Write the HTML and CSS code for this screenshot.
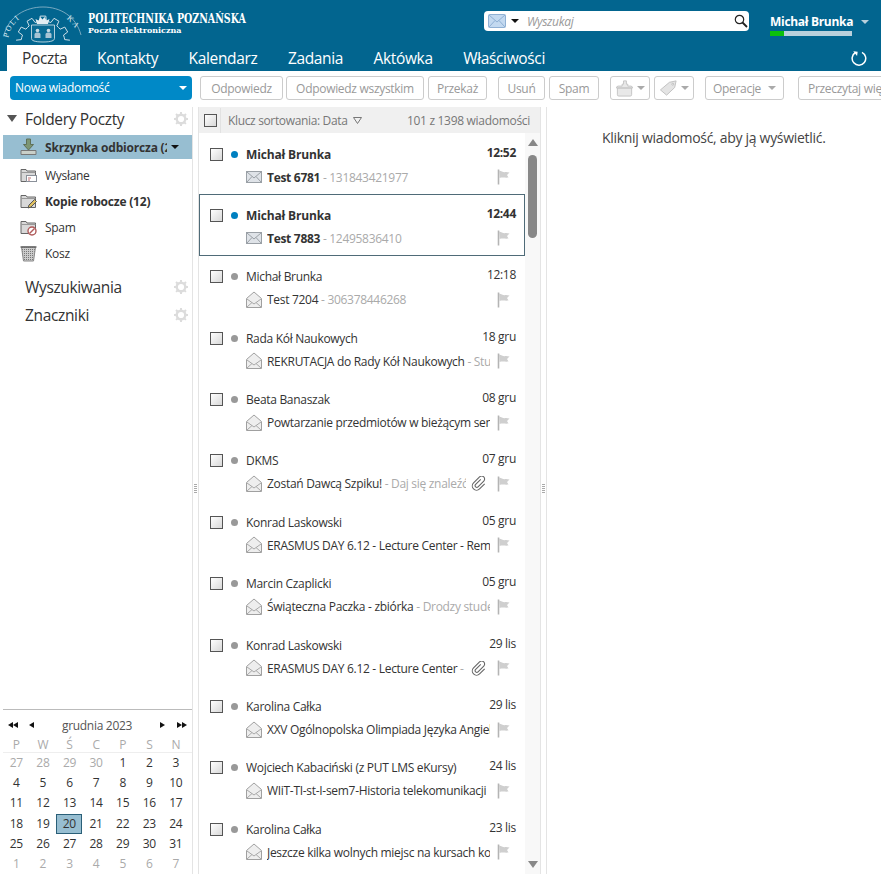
FILE: index.html
```html
<!DOCTYPE html>
<html lang="pl">
<head>
    <meta charset="UTF-8">
    <title>Poczta elektroniczna</title>
    <link rel="stylesheet" href="styles.css">
</head>
<body>
    <svg class="sprites" width="0" height="0">
        <symbol id="i-env" viewBox="0 0 16 16">
            <rect x="0.5" y="2.5" width="15" height="11" fill="#dfe3e8" stroke="#9aa0a6"/>
            <path d="M1 3l7 6 7-6M1 13l5-5.5M15 13l-5-5.5" fill="none" stroke="#9aa0a6"/>
        </symbol>
        <symbol id="i-env-blue" viewBox="0 0 18 14">
            <rect x="0.5" y="0.5" width="17" height="13" rx="1" fill="#c3d9f0" stroke="#8fb0d4"/>
            <path d="M1 1l8 7 8-7M1 13l6-6.500M17 13l-6-6.500" fill="none" stroke="#8fb0d4"/>
        </symbol>
        <symbol id="i-open" viewBox="0 0 16 18">
            <path d="M0.5 7.5L8 1l7.5 6.5v9h-15z" fill="#eeeeee" stroke="#a0a0a0"/>
            <path d="M1 8l7 5 7-5M1 16l5-4.5M15 16l-5-4.5" fill="none" stroke="#a8a8a8"/>
        </symbol>
        <symbol id="i-flag" viewBox="0 0 13 16">
            <path d="M1.5 0.5v15" stroke="#b4b4b4" stroke-width="1.6"/>
            <path d="M2 1.500c3 1 4 2 7 1.500l3.500 .5-2.500 2.500 1.500 2.500c-3 .5-6-.5-9 .5z" fill="#cfcfcf"/>
        </symbol>
        <symbol id="i-gear" viewBox="0 0 14 14">
            <circle cx="7" cy="7" r="4.300" fill="none" stroke="#dcdcdc" stroke-width="2.400"/>
            <path d="M7 0v14M0 7h14M2 2l10 10M12 2L2 12" stroke="#dcdcdc" stroke-width="2" stroke-dasharray="2.200 9.600"/>
        </symbol>
        <symbol id="i-clip" viewBox="0 0 15 15">
            <g transform="rotate(45 7.500 7.500) translate(1.500 0) scale(.85)">
                <path d="M5.500 3.500v8.500a2 2 0 0 0 4 0V2.500a3.500 3.500 0 0 0-7 0v10a5 5 0 0 0 10 0V4" fill="none" stroke="#666" stroke-width="1.300"/>
            </g>
        </symbol>
        <symbol id="i-folder" viewBox="0 0 17 17">
            <path d="M1 2.500h5l1 1.500h8.500v10.500H1z" fill="#d9d9d9" stroke="#666"/>
            <path d="M1 5.500h14.500" stroke="#999"/>
        </symbol>
    </svg>

    <header class="topbar">
        <div class="brand">
            <svg class="logo" width="85" height="38" viewBox="0 0 85 38">
                <defs>
                    <path id="logo-arc" d="M6 36C7 17 24 6 41 6s34 11 36 30"/>
                </defs>
                <path d="M2 30C7 11 24 2 41 2s33 9 38 28" fill="none" stroke="#a9c6d6" stroke-width=".7"/>
                <text class="logo-arc-text"><textPath href="#logo-arc" startOffset="3">POLI</textPath></text>
                <text class="logo-arc-text"><textPath href="#logo-arc" startOffset="76">KA</textPath></text>
                <path d="M14.100 35.200L19.300 34.600A22 22 0 0 1 20.500 30.100L16.300 27L19.200 22.100L23.900 24.200A22 22 0 0 1 27.200 20.900L25.100 16.200L30 13.300L33.100 17.500A22 22 0 0 1 37.600 16.300L38.200 11.100H43.800L44.400 16.300A22 22 0 0 1 48.900 17.500L52 13.300L56.900 16.200L54.800 20.900A22 22 0 0 1 58.100 24.200L62.800 22.100L65.700 27L61.500 30.100A22 22 0 0 1 62.700 34.600L67.900 35.200" fill="none" stroke="#cfe0e9" stroke-width="1"/>
                <path d="M29.500 20h23v13.500c0 2-3 3.500-11.500 3.500s-11.500-1.500-11.500-3.500z" fill="#0a6b94" stroke="#dce8ee" stroke-width=".8"/>
                <circle cx="35.500" cy="25.500" r="1.800" fill="#c4d8e2"/>
                <path d="M32.500 33v-3.500c0-1.500 1.500-2 3-2s3 .5 3 2V33z" fill="#a8c4d4"/>
                <circle cx="46.500" cy="25.500" r="1.800" fill="#c4d8e2"/>
                <path d="M43.500 33v-3.500c0-1.500 1.500-2 3-2s3 .5 3 2V33z" fill="#a8c4d4"/>
                <path d="M35 19l-1.500-5 3 1.500 2-3.500 2 2.500 2-2.500 2 3.500 3-1.500-1.500 5z" fill="#e3edf2"/>
            </svg>
            <div class="brand-text">
                <div class="brand-name">POLITECHNIKA POZNAŃSKA</div>
                <div class="brand-sub">Poczta elektroniczna</div>
            </div>
        </div>
        <div class="search">
            <svg class="search-env" width="18" height="14"><use href="#i-env-blue"/></svg>
            <span class="search-caret"></span>
            <span class="search-text">Wyszukaj</span>
            <svg class="search-glass" width="14" height="14" viewBox="0 0 14 14">
                <circle cx="5.500" cy="5.500" r="4.200" fill="none" stroke="#222" stroke-width="1.200"/>
                <path d="M8.500 8.500l4.500 4.500" stroke="#222" stroke-width="1.800"/>
            </svg>
        </div>
        <div class="user">
            <div class="user-name">Michał Brunka <span class="user-caret"></span></div>
            <div class="quota"><div class="quota-used"></div></div>
        </div>
    </header>

    <nav class="tabs">
        <a class="tab active">Poczta</a>
        <a class="tab">Kontakty</a>
        <a class="tab">Kalendarz</a>
        <a class="tab">Zadania</a>
        <a class="tab">Aktówka</a>
        <a class="tab">Właściwości</a>
        <svg class="refresh" width="16" height="16" viewBox="0 0 16 16">
            <path d="M4.500 2.500A6.800 6.800 0 1 0 11 2.300" fill="none" stroke="#fff" stroke-width="1.500"/>
            <path d="M2 1.500h4.500V5.800z" fill="#fff" transform="rotate(8 4 3)"/>
        </svg>
    </nav>

    <div class="toolbar">
        <div class="compose">Nowa wiadomość <span class="compose-caret"></span></div>
        <button class="tb-btn btn-reply">Odpowiedz</button>
        <button class="tb-btn btn-all">Odpowiedz wszystkim</button>
        <button class="tb-btn btn-fwd">Przekaż</button>
        <button class="tb-btn btn-del">Usuń</button>
        <button class="tb-btn btn-spam">Spam</button>
        <button class="tb-btn btn-icon">
            <svg width="20" height="18" viewBox="0 0 20 18"><path d="M2.500 9h15v7a1.500 1.500 0 0 1-1.500 1.500H4A1.500 1.500 0 0 1 2.500 16zM1.500 9a2 2 0 0 1 2-2h4V5H9V1.500h3V5h1.500v2h3a2 2 0 0 1 2 2z" fill="#e8e8e8" stroke="#c4c4c4"/></svg>
            <span class="tb-caret"></span>
        </button>
        <button class="tb-btn btn-icon">
            <svg width="20" height="18" viewBox="0 0 20 18"><path d="M1.500 11L11 3l7-1.500-1.500 7-8.500 8z" fill="#e4e4e4" stroke="#c0c0c0"/><circle cx="14.500" cy="5" r="1" fill="#fff" stroke="#bbb"/></svg>
            <span class="tb-caret"></span>
        </button>
        <button class="tb-btn btn-ops">Operacje <span class="tb-caret"></span></button>
        <button class="tb-btn btn-read">Przeczytaj więcej</button>
    </div>

    <main class="panes">
        <aside class="sidebar">
            <div class="folders">
                <div class="section-head first">
                    <span class="tree-arrow"></span>
                    <span>Foldery Poczty</span>
                    <svg class="gear" width="14" height="14"><use href="#i-gear"/></svg>
                </div>
                <div class="folder selected">
                    <svg class="folder-icon" width="17" height="18" viewBox="0 0 17 18">
                        <path d="M1 12.500h15v4H1z" fill="#c9cfc9" stroke="#777"/>
                        <path d="M6.500 1h4v5.500h3L8.500 12 3.500 6.500h3z" fill="#7d9673" stroke="#5f7058"/>
                    </svg>
                    <span class="folder-name bold">Skrzynka odbiorcza (2)</span>
                    <span class="folder-caret"></span>
                </div>
                <div class="folder">
                    <svg class="folder-icon" width="17" height="17" viewBox="0 0 17 17">
                        <use href="#i-folder" width="17" height="17"/>
                        <rect x="6.500" y="8.500" width="10" height="6" fill="#fff" stroke="#8a9099"/>
                        <path d="M8 11h3M8 13h2" stroke="#c07070"/>
                    </svg>
                    <span class="folder-name">Wysłane</span>
                </div>
                <div class="folder">
                    <svg class="folder-icon" width="17" height="17" viewBox="0 0 17 17">
                        <use href="#i-folder" width="17" height="17"/>
                        <path d="M8 15l1-3 5.500-5.500 2 2L11 14z" fill="#e0c060" stroke="#555"/>
                    </svg>
                    <span class="folder-name bold">Kopie robocze (12)</span>
                </div>
                <div class="folder">
                    <svg class="folder-icon" width="17" height="17" viewBox="0 0 17 17">
                        <use href="#i-folder" width="17" height="17"/>
                        <circle cx="12" cy="12" r="4" fill="#fff" stroke="#b05a5a" stroke-width="1.400"/>
                        <path d="M9.500 14.500l5-5" stroke="#b05a5a" stroke-width="1.400"/>
                    </svg>
                    <span class="folder-name">Spam</span>
                </div>
                <div class="folder">
                    <svg class="folder-icon" width="17" height="17" viewBox="0 0 17 17">
                        <defs>
                            <pattern id="mesh" width="2" height="2" patternUnits="userSpaceOnUse"><rect width="2" height="2" fill="#ccc"/><rect width="1" height="1" fill="#777"/></pattern>
                        </defs>
                        <path d="M1.500 2h14l-2 14h-10z" fill="url(#mesh)" stroke="#888"/>
                        <path d="M0.500 2h16" stroke="#666" stroke-width="1.500"/>
                    </svg>
                    <span class="folder-name">Kosz</span>
                </div>
                <div class="section-head">
                    <span>Wyszukiwania</span>
                    <svg class="gear" width="14" height="14"><use href="#i-gear"/></svg>
                </div>
                <div class="section-head">
                    <span>Znaczniki</span>
                    <svg class="gear" width="14" height="14"><use href="#i-gear"/></svg>
                </div>
            </div>
            <div class="calendar">
                <div class="cal-head">
                    <span class="cal-nav double"><i class="arrow-l"></i><i class="arrow-l"></i></span>
                    <span class="cal-nav"><i class="arrow-l"></i></span>
                    <span class="cal-title">grudnia 2023</span>
                    <span class="cal-nav next"><i class="arrow-r"></i></span>
                    <span class="cal-nav"><i class="arrow-r"></i><i class="arrow-r"></i></span>
                </div>
                <div class="cal-grid cal-days">
                    <span>P</span><span>W</span><span>Ś</span><span>C</span><span>P</span><span>S</span><span>N</span>
                </div>
                <div class="cal-grid">
                    <span class="off">27</span><span class="off">28</span><span class="off">29</span><span class="off">30</span><span>1</span><span>2</span><span>3</span>
                    <span>4</span><span>5</span><span>6</span><span>7</span><span>8</span><span>9</span><span>10</span>
                    <span>11</span><span>12</span><span>13</span><span>14</span><span>15</span><span>16</span><span>17</span>
                    <span>18</span><span>19</span><span class="today">20</span><span>21</span><span>22</span><span>23</span><span>24</span>
                    <span>25</span><span>26</span><span>27</span><span>28</span><span>29</span><span>30</span><span>31</span>
                    <span class="off">1</span><span class="off">2</span><span class="off">3</span><span class="off">4</span><span class="off">5</span><span class="off">6</span><span class="off">7</span>
                </div>
            </div>
        </aside>

        <div class="splitter"><span class="grip"></span></div>

        <section class="list">
            <div class="sortbar">
                <span class="check"></span>
                <span class="sort-label">Klucz sortowania: Data</span>
                <svg class="sort-icon" width="9" height="7" viewBox="0 0 9 7"><path d="M.5.500h8L4.500 6.500z" fill="none" stroke="#777"/></svg>
                <span class="sort-count">101 z 1398 wiadomości</span>
            </div>
            <div class="rows">
                <div class="messages">
                    <div class="msg unread">
                        <div class="msg-line"><span class="check"></span><span class="dot"></span><span class="from">Michał Brunka</span><span class="when">12:52</span></div>
                        <div class="msg-line sub"><svg class="msg-icon" width="16" height="16"><use href="#i-env"/></svg><span class="subject">Test 6781 <em>- 131843421977</em></span><svg class="flag" width="13" height="16"><use href="#i-flag"/></svg></div>
                    </div>
                    <div class="msg unread focused">
                        <div class="msg-line"><span class="check"></span><span class="dot"></span><span class="from">Michał Brunka</span><span class="when">12:44</span></div>
                        <div class="msg-line sub"><svg class="msg-icon" width="16" height="16"><use href="#i-env"/></svg><span class="subject">Test 7883 <em>- 12495836410</em></span><svg class="flag" width="13" height="16"><use href="#i-flag"/></svg></div>
                    </div>
                    <div class="msg">
                        <div class="msg-line"><span class="check"></span><span class="dot"></span><span class="from">Michał Brunka</span><span class="when">12:18</span></div>
                        <div class="msg-line sub"><svg class="msg-icon" width="16" height="18"><use href="#i-open"/></svg><span class="subject">Test 7204 <em>- 306378446268</em></span><svg class="flag" width="13" height="16"><use href="#i-flag"/></svg></div>
                    </div>
                    <div class="msg">
                        <div class="msg-line"><span class="check"></span><span class="dot"></span><span class="from">Rada Kół Naukowych</span><span class="when">18 gru</span></div>
                        <div class="msg-line sub"><svg class="msg-icon" width="16" height="18"><use href="#i-open"/></svg><span class="subject">REKRUTACJA do Rady Kół Naukowych <em>- Studenci</em></span><svg class="flag" width="13" height="16"><use href="#i-flag"/></svg></div>
                    </div>
                    <div class="msg">
                        <div class="msg-line"><span class="check"></span><span class="dot"></span><span class="from">Beata Banaszak</span><span class="when">08 gru</span></div>
                        <div class="msg-line sub"><svg class="msg-icon" width="16" height="18"><use href="#i-open"/></svg><span class="subject">Powtarzanie przedmiotów w bieżącym semestrze</span><svg class="flag" width="13" height="16"><use href="#i-flag"/></svg></div>
                    </div>
                    <div class="msg">
                        <div class="msg-line"><span class="check"></span><span class="dot"></span><span class="from">DKMS</span><span class="when">07 gru</span></div>
                        <div class="msg-line sub"><svg class="msg-icon" width="16" height="18"><use href="#i-open"/></svg><span class="subject">Zostań Dawcą Szpiku! <em>- Daj się znaleźć</em></span><svg class="clip" width="15" height="15"><use href="#i-clip"/></svg><svg class="flag" width="13" height="16"><use href="#i-flag"/></svg></div>
                    </div>
                    <div class="msg">
                        <div class="msg-line"><span class="check"></span><span class="dot"></span><span class="from">Konrad Laskowski</span><span class="when">05 gru</span></div>
                        <div class="msg-line sub"><svg class="msg-icon" width="16" height="18"><use href="#i-open"/></svg><span class="subject">ERASMUS DAY 6.12 - Lecture Center - Reminder</span><svg class="flag" width="13" height="16"><use href="#i-flag"/></svg></div>
                    </div>
                    <div class="msg">
                        <div class="msg-line"><span class="check"></span><span class="dot"></span><span class="from">Marcin Czaplicki</span><span class="when">05 gru</span></div>
                        <div class="msg-line sub"><svg class="msg-icon" width="16" height="18"><use href="#i-open"/></svg><span class="subject">Świąteczna Paczka - zbiórka <em>- Drodzy studenci</em></span><svg class="flag" width="13" height="16"><use href="#i-flag"/></svg></div>
                    </div>
                    <div class="msg">
                        <div class="msg-line"><span class="check"></span><span class="dot"></span><span class="from">Konrad Laskowski</span><span class="when">29 lis</span></div>
                        <div class="msg-line sub"><svg class="msg-icon" width="16" height="18"><use href="#i-open"/></svg><span class="subject">ERASMUS DAY 6.12 - Lecture Center <em>- Drodzy</em></span><svg class="clip" width="15" height="15"><use href="#i-clip"/></svg><svg class="flag" width="13" height="16"><use href="#i-flag"/></svg></div>
                    </div>
                    <div class="msg">
                        <div class="msg-line"><span class="check"></span><span class="dot"></span><span class="from">Karolina Całka</span><span class="when">29 lis</span></div>
                        <div class="msg-line sub"><svg class="msg-icon" width="16" height="18"><use href="#i-open"/></svg><span class="subject">XXV Ogólnopolska Olimpiada Języka Angielskiego</span><svg class="flag" width="13" height="16"><use href="#i-flag"/></svg></div>
                    </div>
                    <div class="msg">
                        <div class="msg-line"><span class="check"></span><span class="dot"></span><span class="from">Wojciech Kabaciński (z PUT LMS eKursy)</span><span class="when">24 lis</span></div>
                        <div class="msg-line sub"><svg class="msg-icon" width="16" height="18"><use href="#i-open"/></svg><span class="subject">WIiT-TI-st-I-sem7-Historia telekomunikacji</span><svg class="flag" width="13" height="16"><use href="#i-flag"/></svg></div>
                    </div>
                    <div class="msg">
                        <div class="msg-line"><span class="check"></span><span class="dot"></span><span class="from">Karolina Całka</span><span class="when">23 lis</span></div>
                        <div class="msg-line sub"><svg class="msg-icon" width="16" height="18"><use href="#i-open"/></svg><span class="subject">Jeszcze kilka wolnych miejsc na kursach komputerowych</span><svg class="flag" width="13" height="16"><use href="#i-flag"/></svg></div>
                    </div>
                </div>
                <div class="scrollbar">
                    <span class="sb-up"></span>
                    <span class="sb-thumb"></span>
                    <span class="sb-down"></span>
                </div>
            </div>
        </section>

        <div class="splitter"><span class="grip"></span></div>

        <section class="preview">Kliknij wiadomość, aby ją wyświetlić.</section>
    </main>
</body>
</html>
```

FILE: styles.css
```css
html, body {
    margin: 0;
    height: 100%;
    overflow: hidden;
}
body {
    font-family: "Open Sans", "Noto Sans", sans-serif;
    font-size: 12px;
    letter-spacing: -0.3px;
    color: #333;
    background-color: white;
    display: flex;
    flex-direction: column;
}
.sprites {
    position: absolute;
}

/* header */
.topbar {
    height: 44px;
    flex: none;
    background-color: #02658f;
    display: flex;
    align-items: flex-start;
}
.brand {
    width: 484px;
    flex: none;
    display: flex;
}
.logo {
    margin: 5px 0 0 2px;
    flex: none;
}
.logo-arc-text {
    font-family: "Liberation Serif", serif;
    font-size: 8px;
    letter-spacing: 1.500px;
    fill: #dbe8ef;
}
.brand-text {
    margin: 13px 0 0 1px;
    color: white;
    font-family: "DejaVu Serif", serif;
    font-weight: bold;
    letter-spacing: 0;
}
.brand-name {
    font-size: 12px;
    line-height: 12px;
    transform: scaleX(.79);
    transform-origin: left;
    white-space: nowrap;
}
.brand-sub {
    font-size: 8px;
    line-height: 10px;
    white-space: nowrap;
}
.search {
    width: 265px;
    height: 20px;
    margin-top: 11px;
    flex: none;
    box-sizing: border-box;
    padding: 0 1px 0 4px;
    background-color: white;
    border-radius: 4px;
    display: flex;
    align-items: center;
}
.search-env {
    flex: none;
}
.search-caret {
    margin-left: 5px;
    border: 4px solid transparent;
    border-top: 4px solid #111;
    border-bottom: 0;
}
.search-text {
    margin-left: 8px;
    flex: 1;
    font-style: italic;
    color: #999;
}
.user {
    margin: 14px 0 0 21px;
    color: white;
}
.user-name {
    font-weight: bold;
    font-size: 12px;
    line-height: 15px;
    white-space: nowrap;
}
.user-caret {
    display: inline-block;
    margin: 0 0 2px 5px;
    border: 4px solid transparent;
    border-top: 4px solid #b9d0dc;
    border-bottom: 0;
}
.quota {
    width: 82px;
    height: 5px;
    margin-top: 2px;
    background-color: #b9d0dc;
}
.quota-used {
    width: 14px;
    height: 5px;
    background-color: #0cc00c;
}

/* tabs */
.tabs {
    height: 27px;
    flex: none;
    padding-left: 7px;
    background-color: #02658f;
    display: flex;
    align-items: flex-end;
    position: relative;
}
.tab {
    height: 26px;
    padding: 0 13.500px 0 17px;
    font-size: 15.500px;
    letter-spacing: -0.350px;
    line-height: 26px;
    color: white;
    white-space: nowrap;
}
.tab.active {
    background-color: white;
    color: #333;
    width: 73px;
    box-sizing: border-box;
    padding: 0 0 0 15px;
}
.refresh {
    position: absolute;
    right: 14px;
    top: 6px;
}

/* toolbar */
.toolbar {
    height: 36px;
    flex: none;
    display: flex;
    align-items: flex-start;
    white-space: nowrap;
    overflow: hidden;
}
.compose {
    width: 182px;
    height: 24px;
    margin: 5px 8px 0 10px;
    flex: none;
    box-sizing: border-box;
    padding: 0 5px;
    border-radius: 4px;
    background-color: #0089c7;
    color: white;
    line-height: 24px;
    display: flex;
    justify-content: space-between;
    align-items: center;
}
.compose-caret {
    border: 4px solid transparent;
    border-top: 4px solid white;
    border-bottom: 0;
}
.tb-btn {
    height: 24px;
    margin: 5px 4px 0 0;
    padding: 0 9px;
    flex: none;
    font: inherit;
    letter-spacing: inherit;
    color: #999;
    background-color: white;
    border: 1px solid #ccc;
    border-radius: 3px;
    display: flex;
    align-items: center;
    justify-content: center;
}
.btn-reply { width: 83px; margin-right: 3px; }
.btn-all { width: 138px; }
.btn-fwd { width: 59px; margin-right: 11px; }
.btn-del { width: 47px; }
.btn-spam { width: 50px; margin-right: 11px; }
.btn-icon { width: 40px; padding: 0 4px; gap: 3px; }
.btn-ops { width: 79px; margin-left: 7px; margin-right: 14px; gap: 7px; }
.btn-read { width: 120px; justify-content: flex-start; }
.tb-caret {
    flex: none;
    border: 4px solid transparent;
    border-top: 4px solid #aaa;
    border-bottom: 0;
}

/* main panes */
.panes {
    flex: 1;
    min-height: 0;
    display: flex;
}
.splitter {
    width: 5px;
    flex: none;
    display: flex;
    align-items: center;
    justify-content: center;
}
.grip {
    width: 3px;
    height: 10px;
    background-image: linear-gradient(#aaa 1px, transparent 1px);
    background-size: 3px 2px;
    margin-bottom: 4px;
}

/* sidebar */
.sidebar {
    width: 193px;
    flex: none;
    box-sizing: border-box;
    padding-left: 3px;
    border-right: 1px solid #e4e4e4;
    display: flex;
    flex-direction: column;
}
.folders {
    flex: 1;
}
.section-head {
    height: 28px;
    padding: 0 3px 0 22px;
    font-size: 15.500px;
    letter-spacing: -0.350px;
    line-height: 27px;
    color: #333;
    display: flex;
    justify-content: space-between;
    align-items: center;
    position: relative;
}
.section-head.first {
    height: 24px;
    margin-bottom: 4px;
}
.tree-arrow {
    position: absolute;
    left: 4px;
    top: 8px;
    border: 5px solid transparent;
    border-top: 7px solid #555;
    border-bottom: 0;
}
.gear {
    flex: none;
    margin-right: 1px;
}
.folder {
    height: 26px;
    padding-left: 17px;
    display: flex;
    align-items: center;
}
.folder.selected {
    height: 24px;
    margin-bottom: 3px;
    background-color: #97bed1;
    padding-right: 13px;
}
.folder-icon {
    flex: none;
    margin-right: 8px;
}
.folder-name {
    flex: 1;
    min-width: 0;
    white-space: nowrap;
    overflow: hidden;
}
.folder-name.bold {
    font-weight: bold;
    letter-spacing: -0.200px;
}
.folder-caret {
    flex: none;
    margin-left: 4px;
    border: 4px solid transparent;
    border-top: 4px solid #111;
    border-bottom: 0;
}
.folder + .section-head {
    margin-top: 7px;
}

/* calendar */
.calendar {
    border-top: 1px solid #bbb;
    height: 164px;
    flex: none;
}
.cal-head {
    height: 27px;
    box-sizing: border-box;
    padding: 3px 5px 0 5px;
    display: flex;
    align-items: center;
}
.cal-nav {
    flex: none;
    display: flex;
}
.cal-nav.double {
    margin-right: 11px;
}
.cal-nav.next {
    margin-right: 12px;
}
.arrow-l {
    border: 3.500px solid transparent;
    border-right: 5px solid #111;
    border-left: 0;
}
.arrow-r {
    border: 3.500px solid transparent;
    border-left: 5px solid #111;
    border-right: 0;
}
.cal-title {
    flex: 1;
    text-align: center;
    color: #555;
}
.cal-grid {
    display: grid;
    grid-template-columns: repeat(7, 26.600px);
    grid-auto-rows: 20.200px;
    text-align: center;
    line-height: 20px;
}
.cal-days {
    color: #aaa;
    grid-auto-rows: 15px;
    line-height: 15px;
    border-bottom: 1px solid #eee;
}
.off {
    color: #aaa;
}
.today {
    box-sizing: border-box;
    width: 26px;
    height: 20px;
    line-height: 18px;
    background-color: #97bed1;
    border: 1px solid #2a5f78;
}

/* message list */
.list {
    width: 343px;
    flex: none;
    box-sizing: border-box;
    border-left: 1px solid #e4e4e4;
    border-right: 1px solid #e4e4e4;
    display: flex;
    flex-direction: column;
    min-height: 0;
}
.sortbar {
    height: 26px;
    flex: none;
    box-sizing: border-box;
    padding: 1px 10px 0 5px;
    background-color: #f0f0f0;
    color: #777;
    display: flex;
    align-items: center;
}
.sort-label {
    margin-left: 3px;
    padding-left: 7px;
    line-height: 25px;
    letter-spacing: -0.350px;
    border-left: 1px solid #e2e2e2;
}
.sort-icon {
    margin-left: 6px;
}
.sort-count {
    margin-left: auto;
}
.check {
    width: 11px;
    height: 11px;
    flex: none;
    border: 1px solid #555;
    background-image: linear-gradient(135deg, #fff, #d8d8d8);
}
.rows {
    flex: 1;
    min-height: 0;
    display: flex;
    background-color: #f8f8f8;
}
.messages {
    width: 326px;
    flex: none;
    background-color: white;
}
.msg {
    height: 61.400px;
    box-sizing: border-box;
    padding: 8px 8px 0 10px;
    border: 1px solid transparent;
    overflow: hidden;
}
.msg.focused {
    border-color: #4f6b78;
}
.msg-line {
    height: 24px;
    display: flex;
    align-items: center;
}
.msg-line.sub {
    margin-top: -1px;
    padding-left: 36px;
}
.dot {
    width: 7px;
    height: 7px;
    margin: 0 8px 0 8px;
    flex: none;
    border-radius: 50%;
    background-color: #999;
}
.unread .dot {
    background-color: #0080c0;
}
.from {
    flex: 1;
    white-space: nowrap;
    overflow: hidden;
}
.when {
    margin-top: -4px;
    white-space: nowrap;
}
.unread .from,
.unread .when,
.unread .subject {
    font-weight: bold;
}
.unread .from {
    letter-spacing: -0.150px;
}
.unread .subject em {
    font-weight: normal;
}
.msg-icon {
    flex: none;
    margin-right: 5px;
}
.subject {
    flex: 1;
    min-width: 0;
    white-space: nowrap;
    overflow: hidden;
}
.subject em {
    font-style: normal;
    color: #aaa;
}
.clip {
    flex: none;
    margin: 0 4px 0 5px;
}
.flag {
    flex: none;
    margin: 0 6px 0 7px;
}

/* scrollbar */
.scrollbar {
    flex: 1;
    display: flex;
    flex-direction: column;
    align-items: center;
    padding: 6px 0 6px;
}
.sb-up {
    border: 5px solid transparent;
    border-bottom: 7px solid #888;
    border-top: 0;
}
.sb-down {
    margin-top: auto;
    border: 5px solid transparent;
    border-top: 7px solid #888;
    border-bottom: 0;
}
.sb-thumb {
    width: 9px;
    height: 83px;
    margin-top: 9px;
    border-radius: 5px;
    background-color: #888;
}

/* preview */
.preview {
    flex: 1;
    padding: 21px 0 0 55px;
    border-left: 1px solid #e4e4e4;
    font-size: 14px;
    letter-spacing: -0.300px;
    color: #444;
    white-space: nowrap;
}
```
